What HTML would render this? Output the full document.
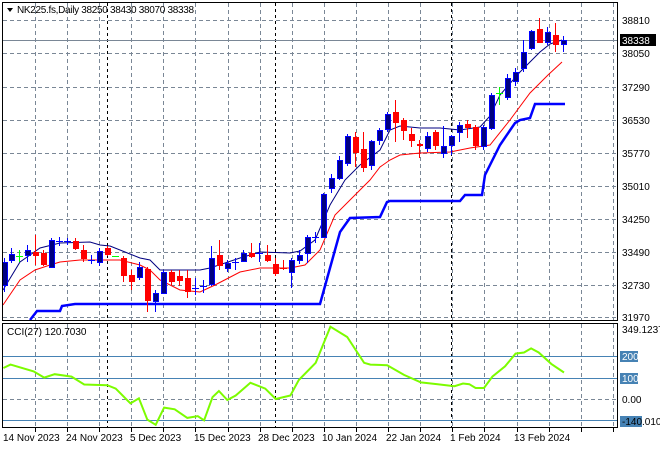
<!DOCTYPE html><html><head><meta charset="utf-8"><style>
body{margin:0;background:#fff;width:660px;height:450px;overflow:hidden;font-family:"Liberation Sans",sans-serif}
svg{position:absolute;left:0;top:0}
</style></head><body>
<svg id="s" width="660" height="450" xmlns="http://www.w3.org/2000/svg" font-family="Liberation Sans, sans-serif" font-size="10">
<g id="grid"></g>
<g id="plot"></g>
<rect x="2.5" y="2.5" width="615" height="318" fill="none" stroke="#000"/>
<rect x="2.5" y="323.5" width="615" height="104" fill="none" stroke="#000"/>
<polygon points="7,8 13,8 10,12" fill="#000"/>
<text x="17" y="13" fill="#000" textLength="177">NK225.fs,Daily  38250 38430 38070 38338</text>
<text x="7" y="335" fill="#000">CCI(27) 120.7030</text>
<g fill="#000">
<text x="622" y="24">38810</text><text x="622" y="57">38050</text><text x="622" y="91">37290</text><text x="622" y="124">36530</text><text x="622" y="157">35770</text><text x="622" y="190">35010</text><text x="622" y="223">34250</text><text x="622" y="256">33490</text><text x="622" y="289">32730</text><text x="622" y="321">31970</text>
</g>
<rect x="620" y="34" width="36" height="12" fill="#000"/><text x="622" y="44" fill="#fff">38338</text>
<text x="622" y="333" fill="#000">349.1237</text>
<rect x="620" y="351" width="18" height="11" fill="#4682b4"/><text x="622" y="360" fill="#fff">200</text>
<rect x="620" y="373" width="18" height="11" fill="#4682b4"/><text x="622" y="382" fill="#fff">100</text>
<text x="622" y="403" fill="#000">0.00</text>
<rect x="620" y="416" width="22" height="11" fill="#4682b4"/><text x="622" y="425" fill="#000">-140.010</text>
<g fill="#000" font-size="10">
<text x="3" y="441">14 Nov 2023</text><text x="66" y="441">24 Nov 2023</text><text x="130" y="441">5 Dec 2023</text><text x="194" y="441">15 Dec 2023</text><text x="258" y="441">28 Dec 2023</text><text x="322" y="441">10 Jan 2024</text><text x="386" y="441">22 Jan 2024</text><text x="450" y="441">1 Feb 2024</text><text x="514" y="441">13 Feb 2024</text>
</g>
</svg>
<script>
var NS="http://www.w3.org/2000/svg",g=document.getElementById('grid'),p=document.getElementById('plot');
function el(t,a,par){var e=document.createElementNS(NS,t);for(var k in a)e.setAttribute(k,a[k]);(par||p).appendChild(e);return e;}
[20,53,87,120,153,186,219,252,285,317].forEach(function(y){el('line',{x1:3,x2:617,y1:y+.5,y2:y+.5,stroke:'#7a8796','stroke-dasharray':'4,3'},g)});
el('line',{x1:3,x2:617,y1:399.5,y2:399.5,stroke:'#7a8796','stroke-dasharray':'4,3'},g);
for(var x=35;x<617;x+=32.1){var xx=Math.round(x)+.5;el('line',{x1:xx,x2:xx,y1:3,y2:320,stroke:'#7a8796','stroke-dasharray':'4,3'},g);el('line',{x1:xx,x2:xx,y1:324,y2:427,stroke:'#7a8796','stroke-dasharray':'4,3'},g);el('line',{x1:xx,x2:xx,y1:428,y2:432,stroke:'#000'},g);}
[107,275,451].forEach(function(x){el('line',{x1:x+.5,x2:x+.5,y1:3,y2:320,stroke:'#000','stroke-dasharray':'3,3'},g);el('line',{x1:x+.5,x2:x+.5,y1:324,y2:427,stroke:'#000','stroke-dasharray':'3,3'},g);});
el('line',{x1:3,x2:617,y1:40.5,y2:40.5,stroke:'#7a8796'},g);
[356,378,420].forEach(function(y){el('line',{x1:3,x2:617,y1:y+.5,y2:y+.5,stroke:'#4682b4'},g)});
function pl(pts,c,w){el('polyline',{points:pts.map(function(a){return a.join(',')}).join(' '),fill:'none',stroke:c,'stroke-width':w});}
pl([[3,290],[20,262],[40,248],[60,243],[90,242],[100,245],[110,246],[140,258],[150,260],[160,270],[200,270],[210,268],[240,258],[260,252],[290,253],[300,251],[315,240],[330,205],[345,180],[360,165],[380,150],[390,130],[400,126],[420,128],[440,128],[460,130],[480,127],[490,116],[500,95],[520,72],[540,52],[550,44],[562,40]],'#000080',1);
pl([[3,305],[20,280],[35,270],[50,265],[60,262],[80,260],[120,260],[140,265],[150,270],[160,280],[180,290],[200,292],[215,285],[240,272],[260,268],[290,268],[305,265],[320,250],[335,215],[355,195],[370,180],[380,167],[390,160],[400,155],[420,153],[450,152],[470,148],[490,145],[510,120],[530,93],[548,75],[562,62]],'#ff0000',1);
pl([[30,320],[37,311],[60,311],[62,306],[75,304],[320,304],[340,232],[350,218],[380,217],[387,202],[390,201],[460,201],[465,195],[482,195],[485,175],[490,165],[500,145],[515,123],[520,120],[530,118],[535,104],[565,104]],'#0000ff',2.5);
var C=[[4,262,285,258,292,'b'],[11,254,260,248,263,'b'],[19,256,256,250,262,'g'],[27,250,255,245,262,'b'],[35,252,255,235,265,'r'],[43,253,264,250,266,'r'],[51,240,267,238,268,'b'],[59,241,241,237,246,'b'],[67,241,241,238,245,'b'],[75,241,248,238,250,'r'],[83,250,258,245,262,'r'],[91,260,260,255,264,'b'],[99,251,262,248,266,'b'],[107,248,254,246,256,'r'],[115,256,256,256,256,'g'],[123,258,275,256,282,'r'],[131,275,281,270,290,'r'],[139,267,277,262,280,'b'],[147,269,300,267,312,'r'],[155,293,301,290,312,'b'],[163,272,293,270,294,'b'],[171,272,281,270,285,'r'],[179,276,280,270,286,'r'],[187,278,291,270,298,'r'],[195,288,288,278,295,'b'],[203,286,286,280,293,'b'],[211,258,284,246,286,'b'],[219,255,265,240,270,'r'],[227,263,268,260,272,'b'],[235,262,262,258,270,'b'],[243,253,261,250,262,'b'],[251,253,256,243,258,'r'],[259,253,253,243,262,'b'],[267,255,260,245,262,'r'],[275,264,273,258,276,'r'],[283,268,268,260,270,'r'],[291,260,272,258,288,'b'],[299,255,260,250,264,'b'],[307,237,253,235,263,'b'],[315,237,237,232,243,'b'],[323,194,237,193,238,'b'],[331,178,188,174,193,'b'],[339,160,178,156,180,'b'],[347,136,163,134,166,'b'],[355,137,152,132,167,'r'],[363,149,167,132,172,'r'],[371,141,165,140,170,'b'],[379,130,140,128,145,'b'],[387,114,129,112,132,'b'],[395,112,122,100,142,'r'],[403,120,130,118,140,'r'],[411,134,140,128,147,'r'],[419,144,145,140,158,'r'],[427,136,148,132,152,'b'],[435,132,145,130,150,'r'],[443,146,153,126,158,'b'],[451,136,145,135,155,'b'],[459,125,132,122,142,'b'],[467,124,127,120,138,'r'],[475,127,145,125,150,'r'],[483,127,146,125,150,'b'],[491,95,128,93,130,'b'],[499,93,93,87,105,'g'],[507,78,97,74,100,'b'],[515,72,81,68,86,'b'],[523,52,68,40,72,'b'],[531,31,48,30,50,'b'],[539,29,42,18,42,'r'],[547,32,42,27,45,'b'],[555,35,44,23,52,'r'],[563,40,44,36,52,'b']];
var col={b:'#000080',r:'#ff0000',g:'#00ff00'};
C.forEach(function(c){var cc=c[5]=='b'?'#0000ff':col[c[5]];var x=c[0];
el('line',{x1:x+.5,x2:x+.5,y1:c[3],y2:c[4],stroke:cc});
if(c[2]-c[1]<1){el('line',{x1:x-3,x2:x+4,y1:c[1]+.5,y2:c[1]+.5,stroke:cc});}
else el('rect',{x:x-1.5,y:c[1]+.5,width:5,height:c[2]-c[1],fill:c[5]=='b'?'#000080':'#ff0000',stroke:c[5]=='b'?'#0000ff':'#ff0000','stroke-width':1});});
var Z=[[8,175],[25,165],[80,185],[105,203],[130,193],[170,200],[200,223],[255,225],[275,235],[310,278],[330,263],[350,325],[370,340],[390,290],[415,295],[445,320],[470,315],[485,327],[505,260],[520,242],[540,268],[560,255],[595,218],[630,235],[655,265],[690,255],[710,210],[750,160],[785,55],[825,85],[865,160],[880,165],[920,167],[960,195],[1000,217],[1040,222],[1080,228],[1100,220],[1115,222],[1130,233],[1150,233],[1170,200],[1200,170],[1225,133],[1245,130],[1262,118],[1280,130],[1310,163],[1340,188]];
pl(Z.map(function(a){return [ (a[0]/2.376).toFixed(1), (307.8+0.344*a[1]).toFixed(1)]}),'#7cfc00',2);
</script>
</body></html>
